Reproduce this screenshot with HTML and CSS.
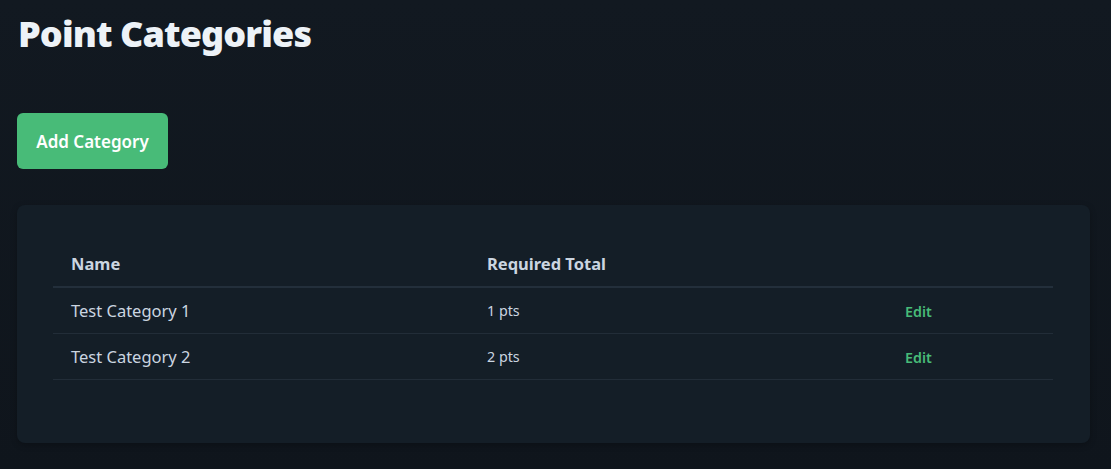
FILE: index.html
```html
<!DOCTYPE html>
<html>
<head>
<meta charset="utf-8">
<link rel="stylesheet" href="styles.css">
</head>
<body>
<main class="page">
  <h1 class="title">Point Categories</h1>
  <div class="actions">
    <button class="btn-add">Add Category</button>
  </div>
  <section class="card">
    <table class="table">
      <thead>
        <tr>
          <th class="col-name">Name</th>
          <th class="col-total">Required Total</th>
          <th class="col-actions"></th>
        </tr>
      </thead>
      <tbody>
        <tr>
          <td class="cell-name">Test Category 1</td>
          <td class="cell-total">1 pts</td>
          <td class="cell-action"><a class="edit">Edit</a></td>
        </tr>
        <tr>
          <td class="cell-name">Test Category 2</td>
          <td class="cell-total">2 pts</td>
          <td class="cell-action"><a class="edit">Edit</a></td>
        </tr>
      </tbody>
    </table>
  </section>
</main>
</body>
</html>
```

FILE: styles.css
```css
* { box-sizing: border-box; }
html, body { margin: 0; height: 100%; }
body {
  background: linear-gradient(180deg, #121921 0%, #0f151c 100%);
  font-family: "Noto Sans", "Open Sans", sans-serif;
  color: #cbd5e0;
}
.page {
  padding: 12px 21px 0 17px;
}
.title {
  margin: 0 0 0 1px;
  font-size: 36px;
  line-height: 44px;
  font-weight: 900;
  color: #edf2f7;
  letter-spacing: -0.9px;
}
.actions {
  margin-top: 57px;
}
.btn-add {
  height: 56px;
  width: 151px;
  border: none;
  border-radius: 6px;
  background: #48bb78;
  color: #ffffff;
  font-family: inherit;
  font-size: 17px;
  font-weight: 600;
  padding: 0;
}
.card {
  margin-top: 36px;
  background: #141e27;
  border-radius: 8px;
  padding: 36px 36px 63px 36px;
  box-shadow: 0 2px 6px rgba(0,0,0,0.25);
}
.table {
  width: 1000px;
  border-collapse: collapse;
}
.table th {
  text-align: left;
  font-size: 16.5px;
  font-weight: 700;
  color: #cbd5e0;
  height: 46px;
  padding: 0 18px;
  border-bottom: 2px solid #232f3b;
}
.col-name { width: 416px; }
.col-total { width: 418px; }
.table td {
  height: 46px;
  padding: 1px 18px 0 18px;
  border-bottom: 1px solid #222d38;
}
.cell-name { font-size: 16.5px; color: #cbd5e0; }
.cell-total { font-size: 14.3px; color: #cbd5e0; }
.edit {
  font-size: 14.3px;
  font-weight: 600;
  color: #48bb78;
  cursor: pointer;
}
```
